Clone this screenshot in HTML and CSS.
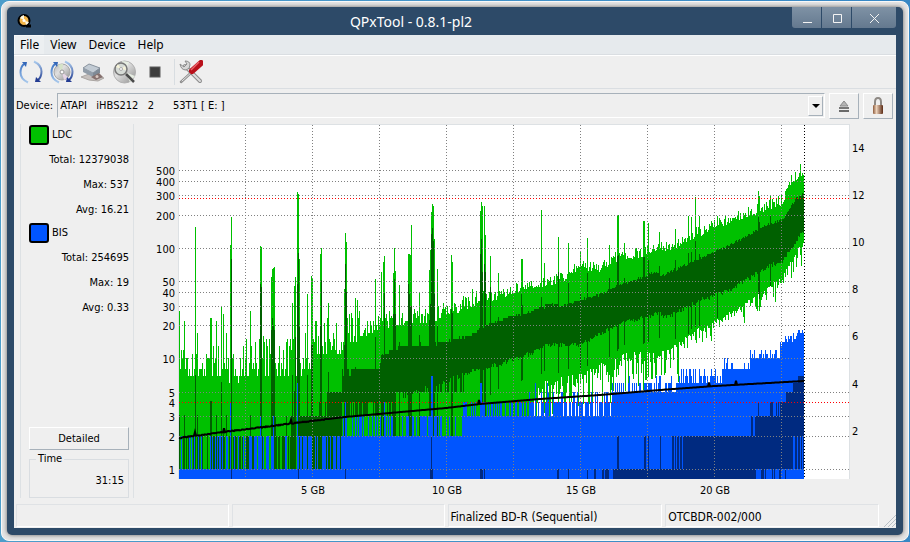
FILE: index.html
```
<!DOCTYPE html>
<html lang="en">
<head>
    <meta charset="UTF-8">
    <meta name="viewport" content="width=device-width, initial-scale=1.0">
    <title>QPxTool - 0.8.1-pl2</title>
    <link rel="stylesheet" href="styles.css">
</head>
<body>
    <div class="shell">
        <div class="window">
            <header class="titlebar">
                <svg class="app-icon" width="16" height="16" viewBox="0 0 16 16">
                    <path d="M9 13h5" stroke="#000" stroke-width="3"/>
                    <circle cx="7" cy="7.500" r="5.500" fill="#f3b64a" stroke="#000" stroke-width="2"/>
                    <path d="M7 7L3 5a5 5 0 0 1 4-3zM8 8l4 1a5 5 0 0 1-3 3z" fill="#fff8df"/>
                    <circle cx="7" cy="7.500" r="1.500" fill="#fff"/>
                </svg>
                <h1>QPxTool - 0.8.1-pl2</h1>
                <div class="window-buttons">
                    <button aria-label="Minimize"><svg width="14" height="14"><path d="M3 11.500h9"/></svg></button>
                    <button aria-label="Maximize"><svg width="14" height="14"><path d="M3.500 3.500h8v8h-8z"/></svg></button>
                    <button class="close" aria-label="Close"><svg width="14" height="14"><path d="M3 3l9 9M12 3l-9 9"/></svg></button>
                </div>
            </header>

            <div class="content">
                <nav class="menubar">
                    <button class="active">File</button>
                    <button>View</button>
                    <button>Device</button>
                    <button>Help</button>
                </nav>

                <div class="toolbar">
                    <svg width="0" height="0" class="defs">
                        <defs>
                            <linearGradient id="arcL" x1="0" y1="0" x2="0" y2="1"><stop offset="0" stop-color="#3f76c6"/><stop offset="1" stop-color="#a9c9ec"/></linearGradient>
                            <linearGradient id="arcR" x1="0" y1="0" x2="0" y2="1"><stop offset="0" stop-color="#a9c9ec"/><stop offset="1" stop-color="#2a4596"/></linearGradient>
                            <linearGradient id="disc" x1="0" y1="0" x2="1" y2="1"><stop offset="0" stop-color="#b4b4b4"/><stop offset=".4" stop-color="#e0e0e0"/><stop offset="1" stop-color="#8e8e8e"/></linearGradient>
                            <linearGradient id="lock" x1="0" y1="0" x2="1" y2="0"><stop offset="0" stop-color="#8d5b3c"/><stop offset=".35" stop-color="#ecd2bb"/><stop offset="1" stop-color="#5b2a14"/></linearGradient>
                        </defs>
                    </svg>
                    <button aria-label="Rescan bus">
                        <svg width="24" height="24" viewBox="0 0 24 24">
                            <path d="M9 22.500Q1.500 19 1.500 12.500Q1.500 7 5 4" fill="none" stroke="url(#arcL)" stroke-width="2"/>
                            <path d="M3 2h5l-1 5z" fill="#3467b8"/>
                            <path d="M15 1.500Q22.500 5 22.500 11.500Q22.500 17 19 20" fill="none" stroke="url(#arcR)" stroke-width="2"/>
                            <path d="M17 17l-1 5h6z" fill="#233c92"/>
                        </svg>
                    </button>
                    <button aria-label="Update media info">
                        <svg width="24" height="24" viewBox="0 0 24 24">
                            <circle cx="12" cy="12" r="8" fill="url(#disc)" stroke="#a8a8a8"/>
                            <path d="M12 12L8 5a8 8 0 0 1 5-1z" fill="#d5e3c8"/>
                            <path d="M12 12l6 5a8 8 0 0 1-4 3z" fill="#e6d5e5"/>
                            <circle cx="12" cy="12" r="2" fill="#fafafa" stroke="#999"/>
                            <path d="M9 22.500Q1.500 19 1.500 12.500Q1.500 7 5 4" fill="none" stroke="url(#arcL)" stroke-width="2"/>
                            <path d="M3 2h5l-1 5z" fill="#3467b8"/>
                            <path d="M15 1.500Q22.500 5 22.500 11.500Q22.500 17 19 20" fill="none" stroke="url(#arcR)" stroke-width="2"/>
                            <path d="M17 17l-1 5h6z" fill="#233c92"/>
                        </svg>
                    </button>
                    <button aria-label="Device properties">
                        <svg width="24" height="24" viewBox="0 0 24 24">
                            <path d="M0 17l8-3 15 4-6 3-9-1z" fill="#c6c0bd" stroke="#aaa5a2"/>
                            <path d="M2 8l6-4 11 4-7 5z" fill="#c2cbd4" stroke="#89939e"/>
                            <path d="M2 8l10 5v4L2 12z" fill="#929da9"/>
                            <path d="M12 13l7-5v5l-7 4z" fill="#7f8a96"/>
                            <path d="M10 17l8-4 4 4-7 3z" fill="#85706e"/>
                            <circle cx="16" cy="16.500" r="1.500" fill="#d8c7c0"/>
                        </svg>
                    </button>
                    <button aria-label="Start scan">
                        <svg width="24" height="24" viewBox="0 0 24 24">
                            <circle cx="12.500" cy="12" r="11" fill="url(#disc)" stroke="#b0b0b0"/>
                            <path d="M13 12L10 1l7 1zM13 12l5 10 5-6z" fill="#e6ede2"/>
                            <circle cx="9" cy="9" r="6" fill="#d6dbd6" stroke="#777" stroke-width="1.500"/>
                            <path d="M9 9l-5-2 2-3zM9 9l4-3 1 4z" fill="#f6f3d8"/>
                            <circle cx="9" cy="9" r="1.500" fill="#fff" stroke="#aaa"/>
                            <path d="M14 14l8 8" stroke="#4a4a4a" stroke-width="2.500"/>
                        </svg>
                    </button>
                    <button aria-label="Stop">
                        <svg width="24" height="24" viewBox="0 0 24 24"><rect x="7" y="7" width="10" height="10" fill="#3c3c3c" stroke="#5a5a5a"/></svg>
                    </button>
                    <span class="separator"></span>
                    <button aria-label="Preferences">
                        <svg width="24" height="24" viewBox="0 0 24 24">
                            <path d="M6 6l15 15" stroke="#8c8c8c" stroke-width="4" stroke-linecap="round"/>
                            <path d="M6 6l15 15" stroke="#dedede" stroke-width="2" stroke-linecap="round"/>
                            <path d="M1 4l4 3 3-3-2-3q5 0 5 4 0 4-4 5-5 0-6-6z" fill="#d7d7d7" stroke="#8c8c8c"/>
                            <path d="M2 22L14 11" stroke="#8f8f8f" stroke-width="2.500" stroke-linecap="round"/>
                            <path d="M3 21L14 11" stroke="#e3e3e3" stroke-linecap="round"/>
                            <path d="M13 11l9-8" stroke="#b9101a" stroke-width="6" stroke-linecap="round"/>
                            <path d="M12 10l8-8" stroke="#ec626a" stroke-width="1.500"/>
                        </svg>
                    </button>
                </div>

                <div class="device-row">
                    <label for="device">Device:</label>
                    <div class="select-box">
                        <select id="device">
                            <option>ATAPI &nbsp; iHBS212 &nbsp; 2 &nbsp; &nbsp; &nbsp;53T1 [ E: ]</option>
                        </select>
                        <span class="arrow"><svg width="8" height="4"><path d="M0 0h8L4 4z"/></svg></span>
                    </div>
                    <button class="tool" aria-label="Eject">
                        <svg width="12" height="14" viewBox="0 0 12 14">
                            <path d="M6 2l4 5H2z" fill="#b5b5b5" stroke="#8a8a8a"/>
                            <path d="M1 8h10v2H1z" fill="#777"/><path d="M1 11h10v2H1z" fill="#6a6a6a"/>
                        </svg>
                    </button>
                    <button class="tool" aria-label="Lock">
                        <svg width="14" height="18" viewBox="0 0 14 18">
                            <path d="M4 9V5q0-4 3-4t3 4v4" fill="none" stroke="#8e8984" stroke-width="2"/>
                            <rect x="2" y="8" width="10" height="9" rx="1" fill="url(#lock)"/>
                        </svg>
                    </button>
                </div>

                <main class="main">
                    <aside class="sidebar">
                        <div class="legend"><span class="swatch ldc"></span>LDC</div>
                        <p>Total: 12379038</p>
                        <p>Max: 537</p>
                        <p>Avg: 16.21</p>
                        <div class="legend"><span class="swatch bis"></span>BIS</div>
                        <p>Total: 254695</p>
                        <p>Max: 19</p>
                        <p>Avg: 0.33</p>
                        <button class="detailed">Detailed</button>
                        <fieldset>
                            <legend>Time</legend>
                            31:15
                        </fieldset>
                    </aside>
                    <div class="chart">
                        <svg id="chart" viewBox="0 0 748 376" role="img" aria-label="LDC and BIS error rates by position"></svg>
                    </div>
                </main>

                <footer class="statusbar">
                    <span class="progress"></span>
                    <span></span>
                    <span>Finalized BD-R (Sequential)</span>
                    <span>OTCBDR-002/000</span>
                    <svg class="grip" width="14" height="14"><path d="M2 14L14 2M6 14l8-8M10 14l4-4"/></svg>
                </footer>
            </div>
        </div>
    </div>
    <script src="chart.js"></script>
</body>
</html>
```
FILE: styles.css
```
/* base */
* {
    box-sizing: border-box;
}
body {
    margin: 0;
    min-height: 100vh;
    display: flex;
    padding: 1px;
    background: linear-gradient(90deg, #4d9dca, #3787c4);
    color: #000;
    font-family: "DejaVu Sans Condensed", "DejaVu Sans", sans-serif;
    font-size: 11px;
    line-height: 14px;
}
button, select {
    font: inherit;
    color: inherit;
    margin: 0;
    padding: 0;
    border: 0;
    background: none;
}
p {
    margin: 0;
}
svg {
    display: block;
}

/* window frame */
.shell {
    flex: 1;
    display: flex;
    padding: 5px;
    border: 1px solid #f8f8f8;
    border-radius: 8px;
    background: #e4e4e4;
}
.window {
    flex: 1;
    display: flex;
    flex-direction: column;
    padding: 0 7px 7px;
    border-radius: 5px;
    background: #2d4a68;
    box-shadow: 0 0 4px #666;
}
.titlebar {
    height: 28px;
    display: grid;
    grid-template-columns: 16px 1fr 104px;
    align-items: center;
    color: #fff;
}
.app-icon {
    margin-left: 3px;
}
.titlebar h1 {
    margin: 0;
    text-align: center;
    font: 14px "Noto Sans", sans-serif;
}
.window-buttons {
    align-self: start;
    display: flex;
    gap: 1px;
}
.window-buttons button {
    flex: 1;
    height: 21px;
    display: grid;
    place-items: center;
    background: linear-gradient(#7f92a5, #64798f);
}
.window-buttons button:first-child {
    border-radius: 0 0 0 3px;
}
.window-buttons .close {
    flex: 0 0 44px;
    border-radius: 0 0 3px 0;
}
.window-buttons path {
    fill: none;
    stroke: #f4f4f4;
}
.content {
    flex: 1;
    display: flex;
    flex-direction: column;
    background: #efefef;
}

/* menu and toolbar */
.menubar {
    height: 20px;
    display: flex;
    background: #e6eaed;
    border-bottom: 1px solid #dadee2;
    font-family: "Noto Sans", sans-serif;
    font-size: 12px;
}
.menubar button {
    padding: 0 6px;
}
.menubar .active {
    background: #eceff1;
    border: solid #f6f8f9;
    border-width: 1px 0 0 1px;
    padding: 0 5px;
}
.toolbar {
    height: 34px;
    display: flex;
    align-items: center;
    gap: 7px;
    padding-left: 5px;
    border-top: 1px solid #fff;
    border-bottom: 1px solid #dadee2;
}
.toolbar .defs {
    position: absolute;
}
.separator {
    height: 26px;
    border-left: 1px solid #d8dde1;
    margin-right: -3px;
}

/* device selector */
.device-row {
    height: 32px;
    display: flex;
    align-items: center;
    gap: 4px;
    padding: 3px 3px 2px 2px;
}
.select-box {
    flex: 1;
    height: 25px;
    display: flex;
    padding: 2px 1px 1px 2px;
    border: 1px solid #a7b1ba;
    border-right-color: #fff;
    border-bottom-color: #fff;
}
.select-box select {
    flex: 1;
    appearance: none;
}
.arrow {
    width: 15px;
    display: grid;
    place-items: center;
    border: 1px solid #fff;
    border-right-color: #a7b1ba;
    border-bottom-color: #a7b1ba;
}
.tool {
    width: 30px;
    height: 26px;
    display: grid;
    place-items: center;
    border: 1px solid #fff;
    border-right: 1px solid #a7b1ba;
    border-bottom: 1px solid #a7b1ba;
}

/* results */
.main {
    flex: 1;
    display: flex;
    padding: 3px 0 0 6px;
}
.sidebar {
    width: 114px;
    display: flex;
    flex-direction: column;
    padding: 1px 4px 0 8px;
    border-left: 1px solid #dde1e4;
    border-right: 1px solid #dde1e4;
    text-align: right;
    margin-bottom: 6px;
}
.legend {
    display: flex;
    align-items: center;
    gap: 3px;
    height: 20px;
}
.swatch {
    width: 20px;
    height: 20px;
    border: 2px solid #000;
    border-radius: 3px;
}
.ldc {
    background: #00c000;
}
.bis {
    background: #0055ff;
}
.sidebar p {
    height: 25px;
    padding-top: 8px;
}
.sidebar p + .legend {
    margin-top: 3px;
}
.detailed {
    height: 23px;
    margin-top: auto;
    border: 1px solid #fff;
    border-right-color: #a7b1ba;
    border-bottom-color: #a7b1ba;
}
fieldset {
    height: 46px;
    margin: 2px 0 0;
    padding: 8px 4px 0;
    border: 1px solid #d9dde1;
}
fieldset legend {
    padding: 0 2px;
    margin-left: 2px;
    margin-right: auto;
}
.chart {
    flex: 1;
    padding-left: 14px;
}
.chart svg {
    width: 100%;
}
.chart text {
    font-size: 11px;
}

/* status bar */
.statusbar {
    height: 24px;
    display: grid;
    grid-template-columns: 213fr 213fr 215fr 214fr 14px;
    gap: 3px;
    padding: 0 0 1px 2px;
    font-size: 12px;
}
.statusbar span {
    border: 1px solid #dfe2e5;
    border-right-color: #fff;
    border-bottom-color: #fff;
    padding: 5px 2px 0;
}
.grip {
    align-self: end;
    fill: none;
    stroke: #b9c0c6;
}
```
FILE: chart.js
```
// plot area inside the svg
const LEFT = 31;
const WIDTH = 671;
const HEIGHT = 355;
const PER_GB = 26.8;
const END = 625;

const svg = document.getElementById('chart');

function add(name, attrs, text) {
    const el = document.createElementNS('http://www.w3.org/2000/svg', name);
    for (const key in attrs) el.setAttribute(key, attrs[key]);
    if (text !== undefined) el.textContent = text;
    svg.appendChild(el);
}

// repeatable noise 0..1
let seed = 11;
function rnd() {
    seed = (seed * 1103515245 + 12345) % 2147483648;
    return seed / 2147483648;
}

// log scale
const yOf = v => v < 1 ? HEIGHT : Math.round(345 - 110.6 * Math.log10(v));

// snap a height to a whole error count
const snap = y => yOf(Math.max(1, Math.round(Math.pow(10, (345 - y) / 110.6))));

// curves as [x, y] points
const ldcMax = [[0,246],[66,248],[132,240],[135,226],[165,220],[183,204],[211,194],[251,192],[281,180],[301,172],[316,172],[326,168],[351,160],[381,155],[401,141],[421,143],[441,131],[461,129],[481,121],[496,123],[511,112],[531,103],[551,94],[571,88],[591,81],[603,76],[611,58],[621,46],[625,50]];
const ldcAvgTop = [[163,248],[200,243],[203,231],[220,221],[251,220],[271,216],[296,208],[308,199],[331,193],[351,187],[371,179],[381,182],[401,175],[421,170],[441,160],[461,154],[476,147],[483,151],[511,138],[541,125],[571,110],[581,103],[603,95],[616,75],[625,68]];
const ldcAvgBottom = [[163,278],[216,275],[251,262],[266,257],[291,247],[311,242],[331,236],[351,229],[366,220],[401,220],[421,210],[441,198],[461,194],[481,188],[486,193],[521,176],[551,165],[571,153],[591,141],[603,138],[616,117],[625,106]];
const ldcMin = [[345,282],[366,265],[401,257],[421,247],[441,237],[461,235],[491,232],[501,225],[521,209],[541,202],[561,189],[581,177],[603,160],[616,136],[625,124]];
const speed = [[0,314],[53,307],[133,297],[166,293],[267,284],[301,280],[361,275],[421,271],[481,266],[536,262],[625,257]];

// isolated spikes: x -> [top of LDC, top of average]
const spikes = {
    0:[187,291], 5:[196,291], 16:[103,251], 18:[209,291], 31:[194,277], 32:[194,277], 37:[197,291], 42:[183,258], 44:[190,310], 47:[208,291],
    51:[121,310], 52:[93,135], 71:[186,291], 81:[122,160], 82:[123,163], 92:[153,206], 93:[145,194], 94:[144,202], 95:[143,206],
    113:[178,251], 115:[162,267], 116:[153,213], 118:[68,160], 119:[70,129], 120:[135,203], 128:[170,251], 132:[152,221], 133:[155,221],
    141:[130,201], 142:[124,156], 149:[178,248], 165:[165,221], 166:[109,140], 167:[118,168], 176:[174,243], 196:[155,213], 202:[148,231],
    204:[138,231], 205:[132,169], 214:[149,190], 215:[124,155], 216:[147,190], 220:[161,218], 229:[130,160], 230:[130,170],
    231:[131,182], 232:[101,182], 240:[168,211], 250:[146,196], 251:[126,180], 252:[88,110], 253:[80,104], 254:[82,117], 255:[115,170],
    258:[145,201], 272:[131,185], 273:[138,189], 301:[87,130], 302:[78,115], 303:[82,148], 305:[82,140], 306:[111,148],
    311:[132,163], 319:[149,193], 342:[135,170], 343:[135,181], 362:[86,173], 365:[139,185], 379:[113,148], 389:[119,159],
    401:[128,170], 408:[114,149], 430:[121,154], 438:[91,132], 439:[91,131], 445:[119,154], 464:[97,133], 465:[97,133], 469:[99,136],
    480:[108,142], 496:[105,136], 509:[92,129], 512:[93,128], 516:[73,117], 520:[92,130], 538:[92,125], 579:[67,93], 580:[72,98], 591:[72,92]
};

function at(points, x) {
    for (let i = 1; i < points.length; i++) {
        const [x0, y0] = points[i - 1];
        const [x1, y1] = points[i];
        if (x <= x1) return y0 + (y1 - y0) * (x - x0) / (x1 - x0);
    }
    return points[points.length - 1][1];
}

const paths = { light: '', dark: '', blue: '', navy: '' };
function bar(layer, x, top, bottom) {
    if (bottom > top) paths[layer] += `M${LEFT + x} ${top}h1v${bottom - top}h-1z`;
}

function bisLevel(x) {
    const r = rnd();
    if (x < 30) return r < .18 ? 2 : 1;
    if (x < 163) return r < .45 ? 2 : 1;
    if (x < 284) return r < .42 ? 3 : 2;
    if (x < 350) return r < .45 ? 4 : 3;
    if (x < 433) return r < .16 ? 3 : r < .7 ? 4 : r < .93 ? 5 : 6;
    if (x < 500) return r < .5 ? 5 : r < .88 ? 6 : 7;
    if (x < 545) return r < .4 ? 6 : r < .85 ? 7 : 8;
    if (x < 571) return r < .6 ? 8 : r < .9 ? 9 : 10;
    if (x < 601) return r < .5 ? 10 : r < .8 ? 11 : 12;
    return Math.round(12 + (x - 601) / 5 + r * 3);
}

for (let x = 0; x < END; x++) {
    const spike = spikes[x];
    const rough = x < 183 ? 42 : x < 300 ? 18 : 11;
    let top = at(ldcMax, x) + (x < 300 ? 8 : 5) - Math.pow(rnd(), 1.6) * rough;
    if (x < 163) top = Math.min(top, 258);
    if (spike) top = spike[0];
    top = snap(top);
    const floor = x < 351 ? HEIGHT : Math.round(at(ldcMin, x) - 8 + rnd() * rnd() * (x < 500 ? 60 : 25));
    bar('light', x, top, floor);

    let avg;
    let avgFloor = HEIGHT;
    if (x < 163) {
        const solid = x > 28 ? .62 : .3;
        avg = rnd() < solid ? 2 : 0;
        if (x > 95 && rnd() < .35) avg = 3;
        if (x > 121) avg = 3;
        if (x > 139) avg = rnd() < .65 ? 4 : 3;
        if (x > 147) avg = 5;
        avg = yOf(avg);
    } else {
        avg = snap(at(ldcAvgTop, x) + rnd() * 3 - 1);
        avgFloor = Math.round(at(ldcAvgBottom, x) + rnd() * 5 - 2);
        if (x < 285 && rnd() < .45) avgFloor = yOf(5);
        if (x < 215) avgFloor = rnd() < .5 ? yOf(3) : yOf(4);
    }
    if (spike) {
        avg = spike[1];
        avgFloor = x < 310 ? HEIGHT : Math.min(floor, avgFloor + 26);
    }
    bar('dark', x, avg, avgFloor);

    let level = bisLevel(x);
    if (x === 118) level = 6;
    if (x === 51 || x === 166 || x === 205) level = 4;
    if (x === 252 || x === 253) level = 7;
    if (x === 301 || x === 302) level = 6;
    if (x === 81 || x === 94) level = 3;
    bar('blue', x, yOf(level), HEIGHT);

    // average of BIS
    let navy = 0;
    let navyFloor = HEIGHT;
    if ([52, 119, 166, 251, 252, 253, 301, 302, 303, 305, 378, 379, 389, 408, 415, 416, 423, 424, 426, 427, 428, 429].includes(x)) navy = 1;
    if (x > 433) navy = 1;
    if ([438, 439, 465, 466, 469, 481, 493, 494, 496, 498, 499, 501, 502].includes(x) || x > 503) navy = 2;
    if ([572, 573].includes(x) || x > 575) navy = 3;
    if ([579, 591, 592, 593, 597, 599].includes(x) || x > 600) navy = 4;
    if (x > 606) navy = 5;
    if (x > 613) navy = 6;
    if (x > 618) navy = 7;
    if (x === 252) navy = 2;
    if (x > 572 && rnd() < .55) navyFloor = yOf(1);
    if (x > 606) navyFloor = yOf(1);
    if ([614, 615, 618, 621, 623].includes(x)) navyFloor = yOf(2);
    bar('navy', x, yOf(navy), navyFloor);
}

add('rect', { x: LEFT - 1, y: 0, width: WIDTH + 1, height: HEIGHT, fill: '#dde1e4' });
add('rect', { x: LEFT, y: 1, width: WIDTH - 1, height: HEIGHT - 1, fill: '#fff' });
add('path', { d: paths.light, fill: '#00c000', 'shape-rendering': 'crispEdges' });
add('path', { d: paths.dark, fill: '#006000', 'shape-rendering': 'crispEdges' });
add('path', { d: paths.blue, fill: '#0055ff', 'shape-rendering': 'crispEdges' });
add('path', { d: paths.navy, fill: '#002a80', 'shape-rendering': 'crispEdges' });

// grid
function line(x1, y1, x2, y2, color) {
    add('line', { x1: x1, y1: y1, x2: x2, y2: y2, stroke: color, 'stroke-dasharray': '1 2' });
}
[1, 2, 3, 5, 10, 20, 30, 40, 50, 100, 200, 300, 400, 500].forEach(v => {
    line(LEFT, yOf(v) + .5, LEFT + WIDTH, yOf(v) + .5, '#808080');
});
for (let gb = 2.5; gb < 25; gb += 2.5) {
    const x = LEFT + Math.floor(gb * PER_GB) - .5;
    line(x, 1, x, HEIGHT, '#808080');
}
[4, 280].forEach(v => line(LEFT, yOf(v) + .5, LEFT + WIDTH, yOf(v) + .5, '#ff0000'));
line(LEFT + END + .5, 1, LEFT + END + .5, HEIGHT, '#000');

// read speed
const blips = [16, 45, 112, 300, 530, 557];
let d = `M${LEFT} ${speed[0][1]}`;
for (let x = 1; x <= END; x++) {
    let y = at(speed, x) + (x < 150 ? rnd() - .5 : 0);
    if (blips.includes(x)) y -= 4;
    d += `L${LEFT + x} ${y.toFixed(1)}`;
}
add('path', { d: d, fill: 'none', stroke: '#000', 'stroke-width': 2 });

// axis labels
[1, 2, 3, 4, 5, 10, 20, 30, 40, 50, 100, 200, 300, 400, 500].forEach(v => {
    add('text', { x: LEFT - 4, y: yOf(v) + 5, 'text-anchor': 'end' }, v);
});
for (let s = 2; s <= 14; s += 2) {
    add('text', { x: LEFT + WIDTH + 2, y: Math.round(358 - s * 23.6) }, s);
}
[5, 10, 15, 20].forEach(gb => {
    add('text', { x: LEFT + Math.round(gb * PER_GB), y: 370, 'text-anchor': 'middle' }, gb + ' GB');
});
```
